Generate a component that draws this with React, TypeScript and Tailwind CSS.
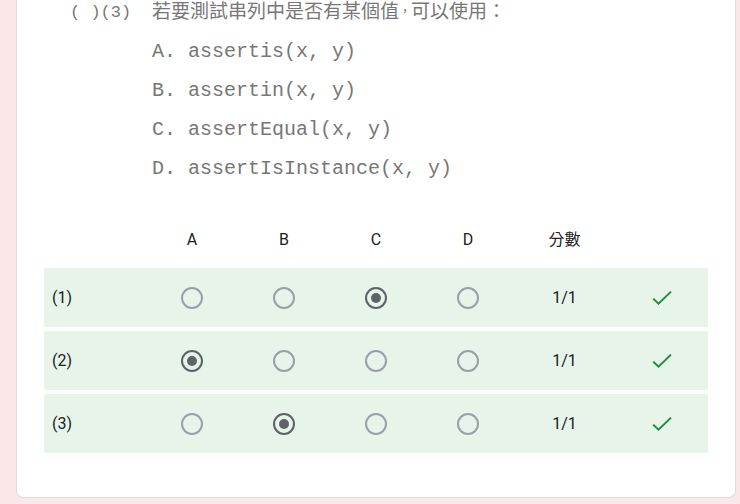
const choices = ["A", "B", "C", "D"];

const answers = [
  { label: "(1)", picked: "C", score: "1/1" },
  { label: "(2)", picked: "A", score: "1/1" },
  { label: "(3)", picked: "B", score: "1/1" },
];

const options = [
  { letter: "A.", code: "assertis(x, y)" },
  { letter: "B.", code: "assertin(x, y)" },
  { letter: "C.", code: "assertEqual(x, y)" },
  { letter: "D.", code: "assertIsInstance(x, y)" },
];

function Question() {
  return (
    <section className="pl-[53px] font-['Liberation_Mono','Noto_Sans_CJK_TC',monospace] text-xl text-[#777777]">
      <div className="flex h-8 whitespace-nowrap leading-[26px]">
        <span className="w-[82px] shrink-0 whitespace-pre text-[17px] leading-[26px]">( )(3)</span>
        <p className="flex text-[19px] leading-[26px]">
          <span>若要測試串列中是否有某個值</span>
          <span className="text-xs leading-[26px]">，</span>
          <span>可以使用：</span>
        </p>
      </div>
      <ul className="pl-[82px]">
        {options.map((option) => (
          <li key={option.letter} className="flex whitespace-pre leading-[39px]">
            <span className="w-9">{option.letter}</span>
            <span>{option.code}</span>
          </li>
        ))}
      </ul>
    </section>
  );
}

function CheckMark() {
  return (
    <svg viewBox="0 0 24 24" className="mx-auto size-6" role="img" aria-label="正確">
      <path d="M3.2 12.6 8.5 17.7 21 5.6" fill="none" stroke="#1e8e3e" strokeWidth="2" />
    </svg>
  );
}

function AnswerGrid() {
  return (
    <table className="mt-5 w-full table-fixed border-separate border-spacing-x-0 border-spacing-y-1 text-center text-base text-[#202124]">
      <colgroup>
        <col className="w-[102px]" />
        {choices.map((choice) => (
          <col key={choice} />
        ))}
        <col className="w-[101px]" />
        <col className="w-[93px]" />
      </colgroup>
      <thead>
        <tr className="h-[52px]">
          <td />
          {choices.map((choice) => (
            <th key={choice} scope="col" className="p-0 pt-1 font-normal">
              {choice}
            </th>
          ))}
          <th scope="col" className="p-0 pt-1 font-normal">
            分數
          </th>
          <td />
        </tr>
      </thead>
      <tbody>
        {answers.map((answer) => (
          <tr key={answer.label} className="h-[59px] bg-[#e6f4ea]">
            <th scope="row" className="rounded-l-xs p-0 pl-2 text-left font-normal">
              {answer.label}
            </th>
            {choices.map((choice) => (
              <td key={choice} className="p-0">
                <input
                  type="radio"
                  name={answer.label}
                  value={choice}
                  defaultChecked={choice === answer.picked}
                  aria-label={`${answer.label} ${choice}`}
                  className="mx-auto grid size-[22px] appearance-none place-content-center rounded-full border-2 border-[#9aa0a6] before:size-2.5 before:rounded-full checked:border-[#5f6368] checked:before:bg-[#5f6368]"
                />
              </td>
            ))}
            <td className="p-0">{answer.score}</td>
            <td className="p-0">
              <CheckMark />
            </td>
          </tr>
        ))}
      </tbody>
    </table>
  );
}

export default function App() {
  return (
    <main className="min-h-screen bg-[#fae8e8] pl-4 pr-1 font-['Roboto','Noto_Sans_CJK_TC',sans-serif]">
      <div className="rounded-b-lg border border-t-0 border-[#dadce0] bg-white pb-10">
        <Question />
        <div className="px-[27px]">
          <AnswerGrid />
        </div>
      </div>
    </main>
  );
}
